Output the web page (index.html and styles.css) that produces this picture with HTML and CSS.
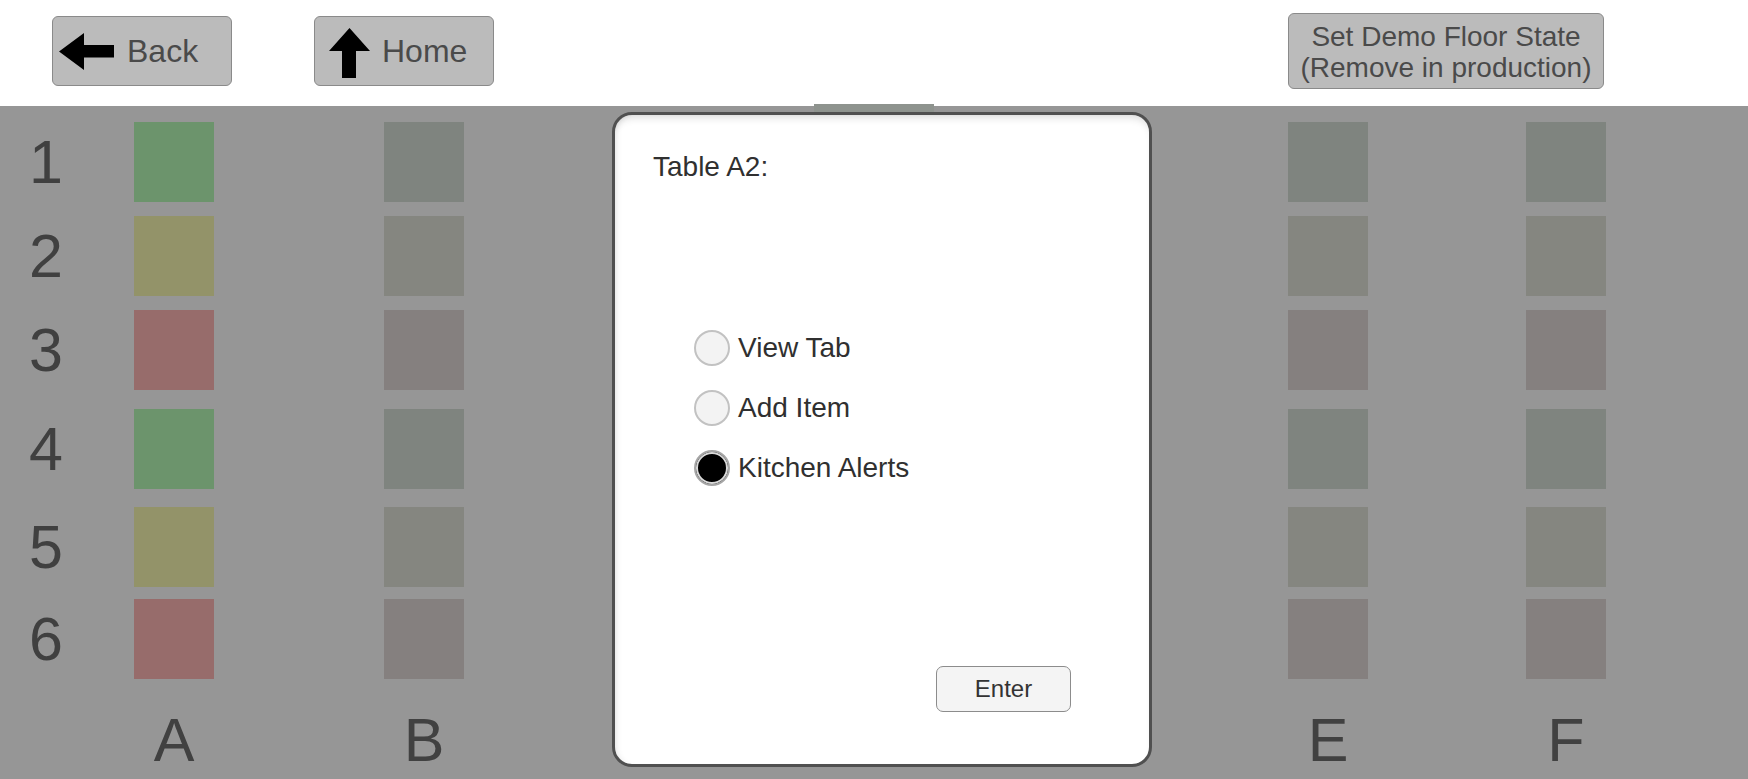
FILE: index.html
```html
<!DOCTYPE html>
<html lang="en">
<head>
    <meta charset="UTF-8">
    <meta name="viewport" content="width=device-width, initial-scale=1.0">
    <title>Floor</title>
    <link rel="stylesheet" href="styles.css">
</head>
<body>

    <div class="header">
        <button class="nav-btn back">
            <svg width="55" height="37" viewBox="0 0 55 37"><polygon points="0,18.5 25,0 25,12 55,12 55,24.5 25,24.5 25,37" fill="#000"/></svg>
            <span>Back</span>
        </button>
        <button class="nav-btn home">
            <svg width="41" height="50" viewBox="0 0 41 50"><polygon points="20.5,0 41,23 27,23 27,50 13,50 13,23 0,23" fill="#000"/></svg>
            <span>Home</span>
        </button>
        <button class="demo-btn">Set Demo Floor State<br>(Remove in production)</button>
    </div>

    <div class="floor">
        <div class="board">
            <div class="row-num">1</div>
            <div class="tbl ok"></div><div class="tbl dim-ok"></div><div class="tbl dim-ok"></div><div class="tbl dim-ok"></div><div class="tbl dim-ok"></div><div class="tbl dim-ok"></div>

            <div class="row-num">2</div>
            <div class="tbl warn"></div><div class="tbl dim-warn"></div><div class="tbl dim-warn"></div><div class="tbl dim-warn"></div><div class="tbl dim-warn"></div><div class="tbl dim-warn"></div>

            <div class="row-num">3</div>
            <div class="tbl late"></div><div class="tbl dim-late"></div><div class="tbl dim-late"></div><div class="tbl dim-late"></div><div class="tbl dim-late"></div><div class="tbl dim-late"></div>

            <div class="row-num">4</div>
            <div class="tbl ok"></div><div class="tbl dim-ok"></div><div class="tbl dim-ok"></div><div class="tbl dim-ok"></div><div class="tbl dim-ok"></div><div class="tbl dim-ok"></div>

            <div class="row-num">5</div>
            <div class="tbl warn"></div><div class="tbl dim-warn"></div><div class="tbl dim-warn"></div><div class="tbl dim-warn"></div><div class="tbl dim-warn"></div><div class="tbl dim-warn"></div>

            <div class="row-num">6</div>
            <div class="tbl late"></div><div class="tbl dim-late"></div><div class="tbl dim-late"></div><div class="tbl dim-late"></div><div class="tbl dim-late"></div><div class="tbl dim-late"></div>

            <div></div>
            <div class="col-name">A</div><div class="col-name">B</div><div class="col-name">C</div><div class="col-name">D</div><div class="col-name">E</div><div class="col-name">F</div>
        </div>
    </div>

    <div class="modal">
        <div class="modal-title">Table A2:</div>
        <div class="options">
            <label class="option"><input type="radio" name="accion"><span>View Tab</span></label>
            <label class="option"><input type="radio" name="accion"><span>Add Item</span></label>
            <label class="option"><input type="radio" name="accion" checked><span>Kitchen Alerts</span></label>
        </div>
        <button class="enter-btn">Enter</button>
    </div>

</body>
</html>
```

FILE: styles.css
```css
body {
    font-family: 'Liberation Sans', Arial, sans-serif;
    margin: 0;
    padding: 0;
    background: #FFFFFF;
    color: #333;
    height: 779px;
    overflow: hidden;
    position: relative;
}

button {
    font-family: inherit;
    cursor: pointer;
}

.header {
    height: 106px;
    box-sizing: border-box;
    padding: 0 144px 4px 52px;
    display: flex;
    align-items: center;
    background: white;
}

.nav-btn {
    width: 180px;
    height: 70px;
    box-sizing: border-box;
    background: #BBBBBB;
    border: 1.5px solid #8A8A8A;
    border-radius: 6px;
    display: flex;
    align-items: center;
    padding: 0 0 0 6px;
    font-size: 32px;
    color: #4A4A4A;
}

.nav-btn svg {
    flex-shrink: 0;
}

.back span {
    margin-left: 13px;
}

.home {
    margin-left: 82px;
    padding-left: 14px;
}

.home svg {
    margin-top: 3px;
}

.home span {
    margin-left: 12px;
}

.demo-btn {
    margin-left: auto;
    width: 316px;
    height: 76px;
    box-sizing: border-box;
    padding: 1px 0 0 0;
    background: #BBBBBB;
    border: 1.5px solid #8A8A8A;
    border-radius: 6px;
    font-size: 28px;
    line-height: 31px;
    color: #4A4A4A;
    text-align: center;
}

.floor {
    background: #969696;
    height: 673px;
}

.board {
    display: grid;
    grid-template-columns: 92px 122px 250px 250px 250px 404px 238px;
    grid-template-rows: 94px 94px 99px 98px 92px 111px auto;
    padding-top: 16px;
}

.row-num {
    height: 80px;
    line-height: 80px;
    text-align: center;
    font-size: 61px;
    color: #404040;
}

.tbl {
    width: 80px;
    height: 80px;
    justify-self: end;
}

.ok { background: #6C946C; }
.warn { background: #939369; }
.late { background: #976C6B; }
.dim-ok { background: #7F847F; }
.dim-warn { background: #858680; }
.dim-late { background: #85807F; }

.col-name {
    width: 80px;
    justify-self: end;
    text-align: center;
    font-size: 61px;
    line-height: 61px;
    color: #414141;
}

.modal {
    position: absolute;
    left: 612px;
    top: 112px;
    width: 540px;
    height: 655px;
    box-sizing: border-box;
    background: white;
    border: 3px solid #505050;
    border-radius: 20px;
    box-shadow: inset 0 7px 8px -5px rgba(0, 0, 0, 0.16), inset 6px 0 6px -5px rgba(0, 0, 0, 0.1);
    padding: 36px 78px 52px 38px;
    display: flex;
    flex-direction: column;
}

.modal::before {
    content: "";
    position: absolute;
    top: -11px;
    left: 199px;
    width: 120px;
    height: 8px;
    background: #8E938E;
}

.modal-title {
    font-size: 28px;
    color: #303030;
}

.options {
    margin: 147px 0 0 41px;
    display: flex;
    flex-direction: column;
    gap: 24px;
}

.option {
    display: flex;
    align-items: center;
    gap: 8px;
    font-size: 28px;
    color: #303030;
    height: 36px;
}

.option input {
    appearance: none;
    -webkit-appearance: none;
    margin: 0;
    width: 36px;
    height: 36px;
    box-sizing: border-box;
    border-radius: 50%;
    border: 2px solid #C2C2C2;
    background: #F3F3F3;
}

.option input:checked {
    border-color: #A6A6A6;
    background: #000;
    box-shadow: inset 0 0 0 2px #DADADA;
}

.enter-btn {
    margin-top: auto;
    align-self: flex-end;
    width: 135px;
    height: 46px;
    box-sizing: border-box;
    background: #F4F4F4;
    border: 1.5px solid #8C8C8C;
    border-radius: 7px;
    font-size: 24px;
    color: #333;
    padding: 0;
}
```
